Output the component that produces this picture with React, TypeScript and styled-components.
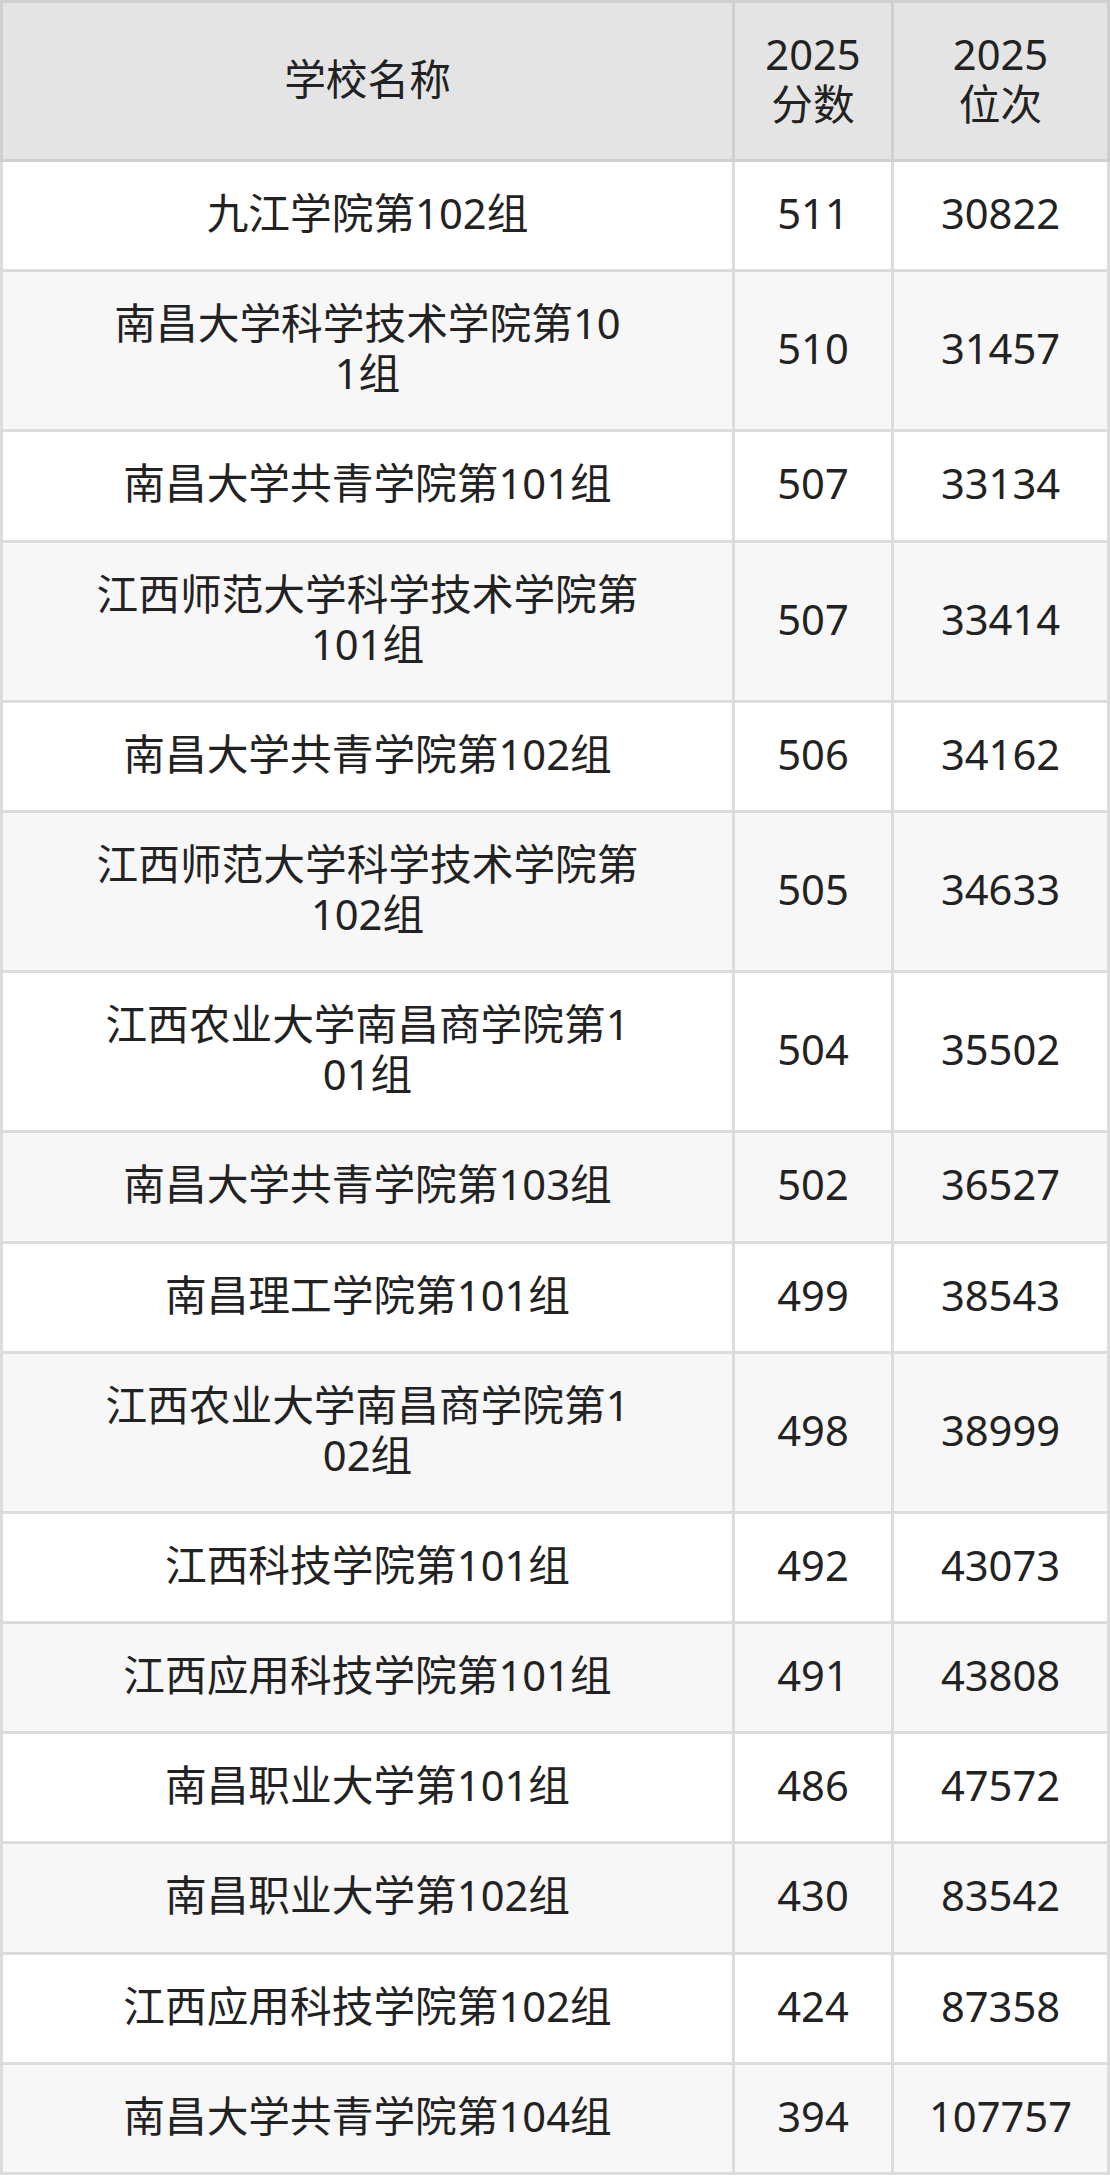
import React from 'react';
import styled, { createGlobalStyle } from 'styled-components';

const GlobalStyle = createGlobalStyle`
  body {
    margin: 0;
    background: #ffffff;
    font-family: 'Noto Sans', 'Noto Sans CJK SC', sans-serif;
    color: #222222;
  }
`;

const Table = styled.div`
  width: 1110px;
  display: flex;
  flex-direction: column;
`;

const Row = styled.div<{ $head?: boolean; $alt?: boolean }>`
  display: grid;
  grid-template-columns: 732px 159px 216px;
  border-left: 3px solid ${(p) => (p.$head ? '#cfcfcf' : '#dcdcdc')};
  border-top: ${(p) => (p.$head ? '3px solid #cfcfcf' : 'none')};
  background: ${(p) => (p.$head ? '#e4e4e4' : p.$alt ? '#f7f7f7' : '#ffffff')};
`;

const Cell = styled.div<{ $head?: boolean }>`
  display: flex;
  align-items: center;
  justify-content: center;
  text-align: center;
  padding: 26px 0 ${(p) => (p.$head ? '30px' : '31.2px')};
  border-right: 3px solid ${(p) => (p.$head ? '#cfcfcf' : '#dcdcdc')};
  border-bottom: 3px solid ${(p) => (p.$head ? '#cfcfcf' : '#dcdcdc')};
  font-size: 41.7px;
  line-height: 50px;
  white-space: nowrap;
`;

const Text = styled.span`
  display: block;
  text-align: center;
`;

type School = { name: string[]; score: string; rank: string };

const schools: School[] = [
  { name: ['九江学院第102组'], score: '511', rank: '30822' },
  { name: ['南昌大学科学技术学院第10', '1组'], score: '510', rank: '31457' },
  { name: ['南昌大学共青学院第101组'], score: '507', rank: '33134' },
  { name: ['江西师范大学科学技术学院第', '101组'], score: '507', rank: '33414' },
  { name: ['南昌大学共青学院第102组'], score: '506', rank: '34162' },
  { name: ['江西师范大学科学技术学院第', '102组'], score: '505', rank: '34633' },
  { name: ['江西农业大学南昌商学院第1', '01组'], score: '504', rank: '35502' },
  { name: ['南昌大学共青学院第103组'], score: '502', rank: '36527' },
  { name: ['南昌理工学院第101组'], score: '499', rank: '38543' },
  { name: ['江西农业大学南昌商学院第1', '02组'], score: '498', rank: '38999' },
  { name: ['江西科技学院第101组'], score: '492', rank: '43073' },
  { name: ['江西应用科技学院第101组'], score: '491', rank: '43808' },
  { name: ['南昌职业大学第101组'], score: '486', rank: '47572' },
  { name: ['南昌职业大学第102组'], score: '430', rank: '83542' },
  { name: ['江西应用科技学院第102组'], score: '424', rank: '87358' },
  { name: ['南昌大学共青学院第104组'], score: '394', rank: '107757' },
];

// the source wraps names at a fixed character count, so lines are given explicitly
const MultiLine = ({ lines }: { lines: string[] }) => (
  <Text>
    {lines.map((line, i) => (
      <React.Fragment key={line}>
        {i > 0 && <br />}
        {line}
      </React.Fragment>
    ))}
  </Text>
);

const App = () => (
  <>
    <GlobalStyle />
    <Table>
      <Row $head>
        <Cell $head>学校名称</Cell>
        <Cell $head>
          <MultiLine lines={['2025', '分数']} />
        </Cell>
        <Cell $head>
          <MultiLine lines={['2025', '位次']} />
        </Cell>
      </Row>
      {schools.map((s, i) => (
        <Row key={s.rank} $alt={i % 2 === 1}>
          <Cell>
            <MultiLine lines={s.name} />
          </Cell>
          <Cell>{s.score}</Cell>
          <Cell>{s.rank}</Cell>
        </Row>
      ))}
    </Table>
  </>
);

export default App;
